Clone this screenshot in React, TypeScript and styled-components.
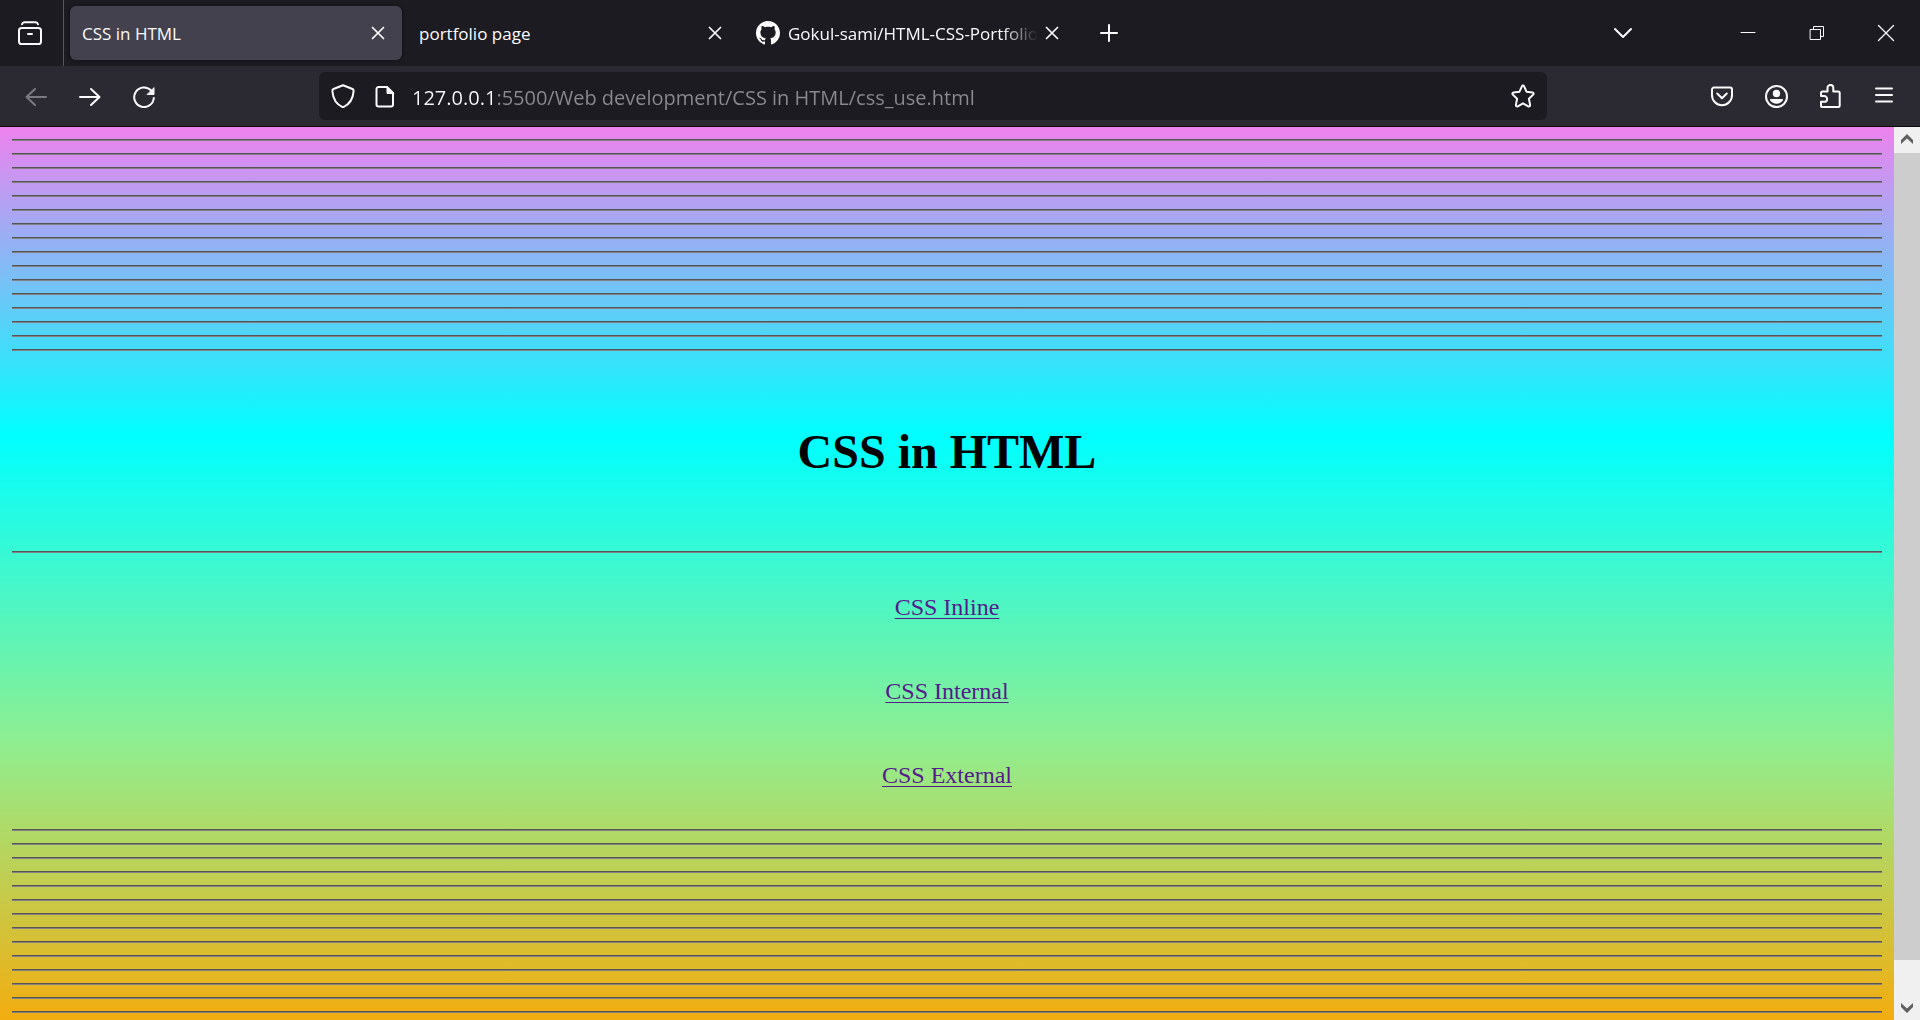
import React from "react";
import styled, { createGlobalStyle } from "styled-components";

const GlobalStyle = createGlobalStyle`
  * { box-sizing: border-box; }
  body { margin: 0; background: #1c1b22; }
`;

const UI_FONT = '"Open Sans", "Noto Sans", sans-serif';

const Window = styled.div`
  display: flex;
  flex-direction: column;
  height: 100vh;
  overflow: hidden;
  color: #fbfbfe;
  font-family: ${UI_FONT};
`;

const TabStrip = styled.header`
  display: flex;
  align-items: stretch;
  flex: none;
  height: 66px;
  background: #1c1b22;
`;

const IconButton = styled.button<{ $width?: number }>`
  display: flex;
  align-items: center;
  justify-content: center;
  flex: none;
  width: ${(p) => p.$width ?? 54}px;
  padding: 0;
  border: 0;
  background: transparent;
  color: #fbfbfe;
  &:disabled { color: #7c7b82; }
`;

const ViewCell = styled.div`
  display: flex;
  flex: none;
  width: 64px;
  padding-left: 3px;
  border-right: 1px solid #57565e;
`;

const Tabs = styled.nav`
  display: flex;
  gap: 5px;
  min-width: 0;
  padding: 6px;
`;

const Tab = styled.div<{ $active?: boolean }>`
  display: flex;
  align-items: center;
  width: 332px;
  min-width: 80px;
  padding: 0 10px 0 12px;
  border-radius: 6px;
  background: ${(p) => (p.$active ? "#42414d" : "transparent")};
  box-shadow: ${(p) => (p.$active ? "0 0 4px rgba(0, 0, 0, 0.5)" : "none")};
`;

const TabIcon = styled.span`
  display: flex;
  flex: none;
  margin-right: 8px;
`;

const TabTitle = styled.span<{ $fade?: boolean }>`
  flex: 1;
  min-width: 0;
  padding-top: 2px;
  overflow: hidden;
  font-size: 17px;
  line-height: 24px;
  white-space: nowrap;
  mask-image: ${(p) =>
    p.$fade ? "linear-gradient(to left, transparent, black 36px)" : "none"};
`;

const WindowControls = styled.div`
  display: flex;
  margin-left: auto;
`;

const ControlGap = styled.div`
  width: 63px;
`;

const Toolbar = styled.div`
  display: flex;
  flex: none;
  height: 61px;
  padding: 6px 9px;
  border-bottom: 1px solid #0c0c0d;
  background: #2b2a33;
`;

const AddressBar = styled.label`
  display: flex;
  align-items: center;
  flex: 1;
  min-width: 0;
  margin: 0 148px;
  padding: 0 12px;
  gap: 15px;
  border-radius: 6px;
  background: #1c1b22;
`;

const SiteIcons = styled.span`
  display: flex;
  flex: none;
  gap: 18px;
`;

const AddressInput = styled.input`
  flex: 1;
  min-width: 0;
  padding: 3px 0 0;
  border: 0;
  outline: 0;
  background: linear-gradient(to right, #fbfbfe 85px, #8b8a90 85px);
  background-clip: text;
  color: transparent;
  font-family: ${UI_FONT};
  font-size: 20px;
  line-height: 28px;
`;

const Viewport = styled.div`
  display: flex;
  flex: 1;
  min-height: 0;
`;

const Scroller = styled.div`
  flex: 1;
  min-width: 0;
  overflow: hidden;
`;

const Page = styled.main`
  display: flow-root;
  padding: 0 12px;
  background: linear-gradient(violet, cyan, lightgreen, orange);
  color: #000;
  font-family: "Liberation Serif", "Times New Roman", serif;
`;

const Rule = styled.hr`
  height: 2px;
  margin: 12px 0;
  border: 0;
  border-top: 1px solid #555;
  background: #838083;
`;

const Heading = styled.h1`
  margin: 73px 0 71px;
  font-size: 48px;
  font-weight: bold;
  line-height: 56px;
  text-align: center;
`;

const LinkList = styled.div`
  display: flex;
  flex-direction: column;
  align-items: center;
  gap: 56px;
  margin: 40px 0;
`;

const PageLink = styled.a`
  color: #551a8b;
  font-size: 24px;
  line-height: 28px;
  text-decoration: underline 1px;
  text-underline-offset: 3px;
`;

const ScrollBar = styled.div`
  display: flex;
  flex-direction: column;
  flex: none;
  width: 26px;
  background: #f0f0f0;
`;

const ScrollButton = styled.button`
  display: flex;
  align-items: center;
  justify-content: center;
  flex: none;
  height: 26px;
  padding: 0;
  border: 0;
  background: transparent;
  color: #606060;
`;

const ScrollTrack = styled.div`
  flex: 1;
`;

const ScrollThumb = styled.div`
  height: 96%;
  background: #cdcdcd;
`;

type IconProps = {
  size: number;
  children: React.ReactNode;
  weight?: number;
};

const Icon = ({ size, children, weight = 2 }: IconProps) => (
  <svg
    width={size}
    height={size}
    viewBox={`0 0 ${size} ${size}`}
    fill="none"
    stroke="currentColor"
    strokeWidth={weight}
    strokeLinecap="round"
    strokeLinejoin="round"
    aria-hidden="true"
  >
    {children}
  </svg>
);

const CloseIcon = () => (
  <Icon size={24} weight={1.7}>
    <path d="M6.5 6.5l11 11M17.5 6.5l-11 11" />
  </Icon>
);

const GitHubMark = () => (
  <svg width="24" height="24" viewBox="0 0 16 16" fill="#fff" aria-hidden="true">
    <path d="M8 0C3.58 0 0 3.58 0 8c0 3.54 2.29 6.53 5.47 7.59.4.07.55-.17.55-.38 0-.19-.01-.82-.01-1.49-2.01.37-2.53-.49-2.69-.94-.09-.23-.48-.94-.82-1.13-.28-.15-.68-.52-.01-.53.63-.01 1.08.58 1.23.82.72 1.21 1.87.87 2.33.66.07-.52.28-.87.51-1.07-1.78-.2-3.64-.89-3.64-3.95 0-.87.31-1.59.82-2.15-.08-.2-.36-1.02.08-2.12 0 0 .67-.21 2.2.82.64-.18 1.32-.27 2-.27s1.36.09 2 .27c1.53-1.04 2.2-.82 2.2-.82.44 1.1.16 1.92.08 2.12.51.56.82 1.27.82 2.15 0 3.07-1.87 3.75-3.65 3.95.29.25.54.73.54 1.48 0 1.07-.01 1.93-.01 2.2 0 .21.15.46.55.38A8.01 8.01 0 0 0 16 8c0-4.42-3.58-8-8-8z" />
  </svg>
);

type TabInfo = { title: string; active?: boolean; github?: boolean };

const tabs: TabInfo[] = [
  { title: "CSS in HTML", active: true },
  { title: "portfolio page" },
  { title: "Gokul-sami/HTML-CSS-Portfolio", github: true },
];

const links = ["CSS Inline", "CSS Internal", "CSS External"];

const Rules = ({ count }: { count: number }) => (
  <>
    {Array.from({ length: count }, (_, i) => (
      <Rule key={i} />
    ))}
  </>
);

export default function App() {
  return (
    <Window>
      <GlobalStyle />
      <TabStrip>
        <ViewCell>
          <IconButton aria-label="Firefox View">
            <Icon size={24}>
              <path d="M4 3.2C4.4 1.8 5 1.2 6.4 1.2h11.2c1.4 0 2 .6 2.4 2" />
              <rect x="1" y="7" width="22" height="16" rx="2.6" />
              <path d="M10 13h4" />
            </Icon>
          </IconButton>
        </ViewCell>
        <Tabs aria-label="Tabs">
          {tabs.map((tab) => (
            <Tab key={tab.title} $active={tab.active}>
              {tab.github && (
                <TabIcon>
                  <GitHubMark />
                </TabIcon>
              )}
              <TabTitle $fade={tab.github}>{tab.title}</TabTitle>
              <IconButton $width={28} aria-label={`Close ${tab.title}`}>
                <CloseIcon />
              </IconButton>
            </Tab>
          ))}
        </Tabs>
        <IconButton $width={54} aria-label="New tab">
          <Icon size={24}>
            <path d="M12 4v16M4 12h16" />
          </Icon>
        </IconButton>
        <WindowControls>
          <IconButton aria-label="List all tabs">
            <Icon size={24}>
              <path d="M4 8l8 8 8-8" />
            </Icon>
          </IconButton>
          <ControlGap />
          <IconButton $width={69} aria-label="Minimize">
            <Icon size={24} weight={1}>
              <path d="M5 11.5h14" />
            </Icon>
          </IconButton>
          <IconButton $width={69} aria-label="Restore">
            <Icon size={24} weight={1}>
              <path d="M5.500 8.500h10v10h-10zM8.500 8.500v-3h10v10h-3" />
            </Icon>
          </IconButton>
          <IconButton $width={69} aria-label="Close window">
            <Icon size={24} weight={1.3}>
              <path d="M4.500 4.500l15 15M19.500 4.500l-15 15" />
            </Icon>
          </IconButton>
        </WindowControls>
      </TabStrip>

      <Toolbar>
        <IconButton disabled aria-label="Back">
          <Icon size={24}>
            <path d="M22 13H3M11 5l-8.500 8 8.500 8" />
          </Icon>
        </IconButton>
        <IconButton aria-label="Forward">
          <Icon size={24}>
            <path d="M2 13h19M13 5l8.500 8-8.500 8" />
          </Icon>
        </IconButton>
        <IconButton aria-label="Reload">
          <Icon size={24}>
            <path d="M19.300 6.700A9.800 9.800 0 1 0 21.800 14" />
            <path d="M22 4v6.500h-6.500z" fill="currentColor" strokeWidth="1" />
          </Icon>
        </IconButton>
        <AddressBar>
          <SiteIcons>
            <Icon size={24}>
              <path d="M12 1.200L21.500 5c1 .5 1.200 1 1.100 2.200C22 15.500 18.500 20.500 12 23.300 5.500 20.500 2 15.500 1.400 7.200 1.300 6 1.500 5.500 2.500 5z" />
            </Icon>
            <Icon size={24}>
              <path d="M5 3h9l6 6v11.500a2 2 0 0 1-2 2H5.500a2 2 0 0 1-2-2V5a2 2 0 0 1 2-2z" />
              <path d="M14 3v6.500h6.500z" fill="currentColor" strokeWidth="1" />
            </Icon>
          </SiteIcons>
          <AddressInput
            type="text"
            aria-label="Address"
            defaultValue="127.0.0.1:5500/Web development/CSS in HTML/css_use.html"
          />
          <Icon size={24}>
            <path d="M10.900 2.300c.4-1 1.800-1 2.200 0l2.400 5.400 5.900.7c1.200.2 1.600 1.400.8 2.200l-4.300 4.100 1.200 6.200c.2 1.200-.9 1.900-1.900 1.400L12 19.300l-5.200 3c-1 .5-2.100-.2-1.900-1.400l1.200-6.200-4.300-4.100c-.8-.8-.4-2 .8-2.200l5.900-.7z" />
          </Icon>
        </AddressBar>
        <IconButton aria-label="Save to Pocket">
          <Icon size={24}>
            <path d="M4 3.500h16a2 2 0 0 1 2 2v5.700a10 10 0 0 1-20 0V5.500a2 2 0 0 1 2-2z" />
            <path d="M7.200 9.500l4.800 4.700 4.800-4.700" />
          </Icon>
        </IconButton>
        <IconButton aria-label="Account">
          <Icon size={24}>
            <circle cx="12.500" cy="12.500" r="10.500" />
            <circle cx="12.500" cy="9.500" r="3.700" fill="currentColor" stroke="none" />
            <path
              d="M7 15h11c.9 0 1.300.7.800 1.500-1.300 2-3.600 3.200-6.300 3.200s-5-1.200-6.300-3.200c-.5-.8-.1-1.500.8-1.500z"
              fill="currentColor"
              stroke="none"
            />
          </Icon>
        </IconButton>
        <IconButton aria-label="Extensions">
          <Icon size={24}>
            <path d="M3 22V17.800h3.200a2.900 2.900 0 0 0 0-5.800H3V9a1.500 1.500 0 0 1 1.500-1.500H9.500V3.800a2.900 2.900 0 0 1 5.800 0v3.700h4.900A1.500 1.500 0 0 1 21.700 9v12.500A1.500 1.500 0 0 1 20.200 23H4a1 1 0 0 1-1-1z" />
          </Icon>
        </IconButton>
        <IconButton aria-label="Menu">
          <Icon size={24}>
            <path d="M4 4.500h16M4 11h16M4 17.500h16" />
          </Icon>
        </IconButton>
      </Toolbar>

      <Viewport>
        <Scroller>
          <Page>
            <Rules count={16} />
            <Heading>CSS in HTML</Heading>
            <Rule />
            <LinkList>
              {links.map((label) => (
                <PageLink key={label} href="#">
                  {label}
                </PageLink>
              ))}
            </LinkList>
            <Rules count={16} />
          </Page>
        </Scroller>
        <ScrollBar>
          <ScrollButton aria-label="Scroll up">
            <svg width="12" height="12" viewBox="0 0 12 12" aria-hidden="true">
              <path d="M0 6l6-6 6 6v4L6 4.500l-6 5.500z" fill="currentColor" />
            </svg>
          </ScrollButton>
          <ScrollTrack>
            <ScrollThumb />
          </ScrollTrack>
          <ScrollButton aria-label="Scroll down">
            <svg width="12" height="12" viewBox="0 0 12 12" aria-hidden="true">
              <path d="M0 6l6 6 6-6V2L6 7.500 0 2z" fill="currentColor" />
            </svg>
          </ScrollButton>
        </ScrollBar>
      </Viewport>
    </Window>
  );
}
